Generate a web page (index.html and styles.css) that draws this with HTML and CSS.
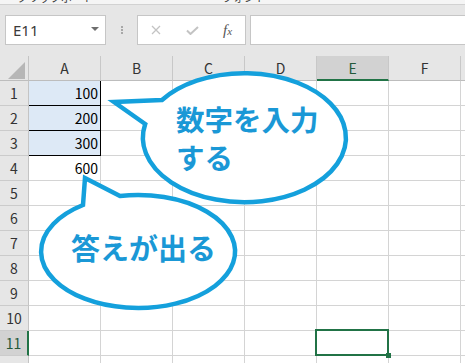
FILE: index.html
```html
<!DOCTYPE html>
<html lang="ja">
<head>
    <meta charset="UTF-8">
    <meta name="viewport" content="width=device-width, initial-scale=1.0">
    <title>Sum</title>
    <link rel="stylesheet" href="styles.css">
</head>
<body>
    <!-- bottom edge of the ribbon -->
    <div class="ribbon-edge">
        <span class="ribbon-label">クリップボード</span>
        <span class="ribbon-label second">フォント</span>
    </div>

    <!-- Formula bar -->
    <div class="formula-bar">
        <div class="name-box">
            <span>E11</span>
            <span class="caret"></span>
        </div>
        <div class="grip"><i></i><i></i><i></i></div>
        <div class="fx-buttons">
            <svg class="icon-cancel" width="10" height="10" viewBox="0 0 10 10">
                <path d="M1 1 L9 9 M9 1 L1 9" stroke="#c3c3c3" stroke-width="1.3" fill="none"/>
            </svg>
            <svg class="icon-enter" width="13" height="9" viewBox="0 0 13 9">
                <path d="M1 4.5 L4.5 8 L12 1" stroke="#c3c3c3" stroke-width="2" fill="none"/>
            </svg>
            <span class="fx"><i>f</i><i class="fx-x">x</i></span>
        </div>
        <div class="formula-input"></div>
    </div>

    <!-- Sheet -->
    <div class="sheet">
        <div class="row col-heads">
            <div class="corner">
                <svg width="17" height="17" viewBox="0 0 17 17"><polygon points="17,0 17,17 0,17" fill="#b6b6b6"/></svg>
            </div>
            <div class="col-head">A</div>
            <div class="col-head">B</div>
            <div class="col-head">C</div>
            <div class="col-head">D</div>
            <div class="col-head active">E</div>
            <div class="col-head">F</div>
            <div class="col-head"></div>
        </div>
        <div class="row">
            <div class="row-head">1</div>
            <div class="cell input">100</div>
            <div class="cell"></div><div class="cell"></div><div class="cell"></div><div class="cell"></div><div class="cell"></div><div class="cell"></div>
        </div>
        <div class="row">
            <div class="row-head">2</div>
            <div class="cell input">200</div>
            <div class="cell"></div><div class="cell"></div><div class="cell"></div><div class="cell"></div><div class="cell"></div><div class="cell"></div>
        </div>
        <div class="row">
            <div class="row-head">3</div>
            <div class="cell input">300</div>
            <div class="cell"></div><div class="cell"></div><div class="cell"></div><div class="cell"></div><div class="cell"></div><div class="cell"></div>
        </div>
        <div class="row">
            <div class="row-head">4</div>
            <div class="cell">600</div>
            <div class="cell"></div><div class="cell"></div><div class="cell"></div><div class="cell"></div><div class="cell"></div><div class="cell"></div>
        </div>
        <div class="row">
            <div class="row-head">5</div>
            <div class="cell"></div><div class="cell"></div><div class="cell"></div><div class="cell"></div><div class="cell"></div><div class="cell"></div><div class="cell"></div>
        </div>
        <div class="row">
            <div class="row-head">6</div>
            <div class="cell"></div><div class="cell"></div><div class="cell"></div><div class="cell"></div><div class="cell"></div><div class="cell"></div><div class="cell"></div>
        </div>
        <div class="row">
            <div class="row-head">7</div>
            <div class="cell"></div><div class="cell"></div><div class="cell"></div><div class="cell"></div><div class="cell"></div><div class="cell"></div><div class="cell"></div>
        </div>
        <div class="row">
            <div class="row-head">8</div>
            <div class="cell"></div><div class="cell"></div><div class="cell"></div><div class="cell"></div><div class="cell"></div><div class="cell"></div><div class="cell"></div>
        </div>
        <div class="row">
            <div class="row-head">9</div>
            <div class="cell"></div><div class="cell"></div><div class="cell"></div><div class="cell"></div><div class="cell"></div><div class="cell"></div><div class="cell"></div>
        </div>
        <div class="row">
            <div class="row-head">10</div>
            <div class="cell"></div><div class="cell"></div><div class="cell"></div><div class="cell"></div><div class="cell"></div><div class="cell"></div><div class="cell"></div>
        </div>
        <div class="row">
            <div class="row-head active">11</div>
            <div class="cell"></div><div class="cell"></div><div class="cell"></div><div class="cell"></div>
            <div class="cell selected"></div>
            <div class="cell"></div><div class="cell"></div>
        </div>
        <div class="row">
            <div class="row-head">12</div>
            <div class="cell"></div><div class="cell"></div><div class="cell"></div><div class="cell"></div><div class="cell"></div><div class="cell"></div><div class="cell"></div>
        </div>

        <!-- Callouts drawn over the sheet (page coordinates) -->
        <svg class="callouts" width="465" height="307" viewBox="0 56 465 307">
            <path class="bubble" d="M162 100 L114 102 L145.2 124 A101.5 64.5 0 1 0 162 100 Z"/>
            <text class="bubble-text" x="176" y="131">数字を入力</text>
            <text class="bubble-text" x="176" y="169">する</text>

            <path class="bubble" d="M120 196 L85 178 L83 205 A97 56.5 0 1 0 120 196 Z"/>
            <text class="bubble-text big" x="71" y="260">答えが出る</text>
        </svg>
    </div>
</body>
</html>
```

FILE: styles.css
```css
body {
    margin: 0;
    width: 465px;
    height: 363px;
    overflow: hidden;
    background-color: #fff;
    font-family: "Noto Sans CJK JP", sans-serif;
}

/* ribbon edge */
.ribbon-edge {
    height: 4px;
    display: flex;
    overflow: hidden;
    background-color: #f5f5f5;
    border-bottom: 1px solid #d2d2d2;
}
.ribbon-label {
    flex-shrink: 0;
    margin-top: -9px;
    margin-left: 17px;
    font-size: 11px;
    line-height: 12px;
    color: #3c3c3c;
}
.ribbon-label.second {
    margin-left: 128px;
}

/* formula bar */
.formula-bar {
    height: 51px;
    box-sizing: border-box;
    display: flex;
    align-items: flex-start;
    padding: 10px 0 0 5px;
    background-color: #e6e6e6;
}
.name-box {
    width: 101px;
    height: 30px;
    box-sizing: border-box;
    flex-shrink: 0;
    display: flex;
    align-items: center;
    justify-content: space-between;
    padding: 0 6px 0 7px;
    background-color: #fff;
    border: 1px solid #c6c6c6;
    font-family: "Noto Sans", sans-serif;
    font-size: 15px;
    color: #3a3a3a;
}
.caret {
    width: 0;
    height: 0;
    margin-top: -2px;
    border-left: 4px solid transparent;
    border-right: 4px solid transparent;
    border-top: 4px solid #6e6e6e;
}
.grip {
    width: 31px;
    height: 30px;
    flex-shrink: 0;
    display: flex;
    flex-direction: column;
    align-items: center;
    justify-content: center;
    gap: 1px;
}
.grip i {
    width: 2px;
    height: 2px;
    background-color: #a8a8a8;
}
.fx-buttons {
    width: 109px;
    height: 30px;
    box-sizing: border-box;
    flex-shrink: 0;
    display: flex;
    align-items: center;
    padding-left: 13px;
    background-color: #fff;
    border: 1px solid #c6c6c6;
}
.icon-enter {
    margin-left: 25px;
}
.fx {
    margin-left: 24px;
    font-family: "Liberation Serif", serif;
    font-size: 15px;
    color: #555;
}
.fx-x {
    font-size: 11px;
}
.formula-input {
    flex: 1;
    height: 30px;
    box-sizing: border-box;
    margin-left: 4px;
    background-color: #fff;
    border: 1px solid #c6c6c6;
    border-right: none;
}

/* sheet */
.sheet {
    position: relative;
}
.row {
    display: flex;
    height: 25px;
}
.row > div {
    flex-shrink: 0;
    box-sizing: border-box;
    height: 25px;
}
.corner {
    width: 29px;
    padding: 4px 0 0 8px;
    background-color: #e6e6e6;
    border-right: 1px solid #c4c4c4;
    border-bottom: 1px solid #bdbdbd;
}
.col-head {
    width: 72px;
    text-align: center;
    font-size: 14px;
    line-height: 24px;
    color: #333;
    background-color: #e6e6e6;
    border-right: 1px solid #c8c8c8;
    border-bottom: 1px solid #bdbdbd;
}
.col-head.active {
    background-color: #d2d2d2;
    color: #24593a;
    border-bottom: 2px solid #217346;
}
.row-head {
    width: 29px;
    text-align: center;
    font-size: 14px;
    line-height: 24px;
    color: #333;
    background-color: #e6e6e6;
    border-right: 1px solid #c4c4c4;
    border-bottom: 1px solid #cbcbcb;
}
.row-head.active {
    background-color: #d2d2d2;
    color: #24593a;
    border-right: 2px solid #217346;
}
.cell {
    width: 72px;
    padding-right: 2px;
    text-align: right;
    font-size: 14px;
    line-height: 24px;
    color: #000;
    border-right: 1px solid #d4d4d4;
    border-bottom: 1px solid #d4d4d4;
}
.cell.input {
    background-color: #dde9f6;
    border-right-color: #000;
    border-bottom-color: #000;
}
.cell.selected {
    position: relative;
}
.cell.selected::after {
    content: "";
    position: absolute;
    top: -2px;
    left: -2px;
    right: -1px;
    bottom: -1px;
    border: 2px solid #217346;
}
.cell.selected::before {
    content: "";
    position: absolute;
    right: -3px;
    bottom: -3px;
    width: 5px;
    height: 5px;
    background-color: #217346;
    z-index: 1;
}

/* callouts */
.callouts {
    position: absolute;
    top: 0;
    left: 0;
}
.bubble {
    fill: #fff;
    stroke: #14a0dc;
    stroke-width: 4.5;
    stroke-linejoin: miter;
}
.bubble-text {
    font-family: "Noto Sans CJK JP", sans-serif;
    font-weight: 700;
    font-size: 28.5px;
    fill: #1a98d6;
}
.bubble-text.big {
    font-size: 29px;
}
```
